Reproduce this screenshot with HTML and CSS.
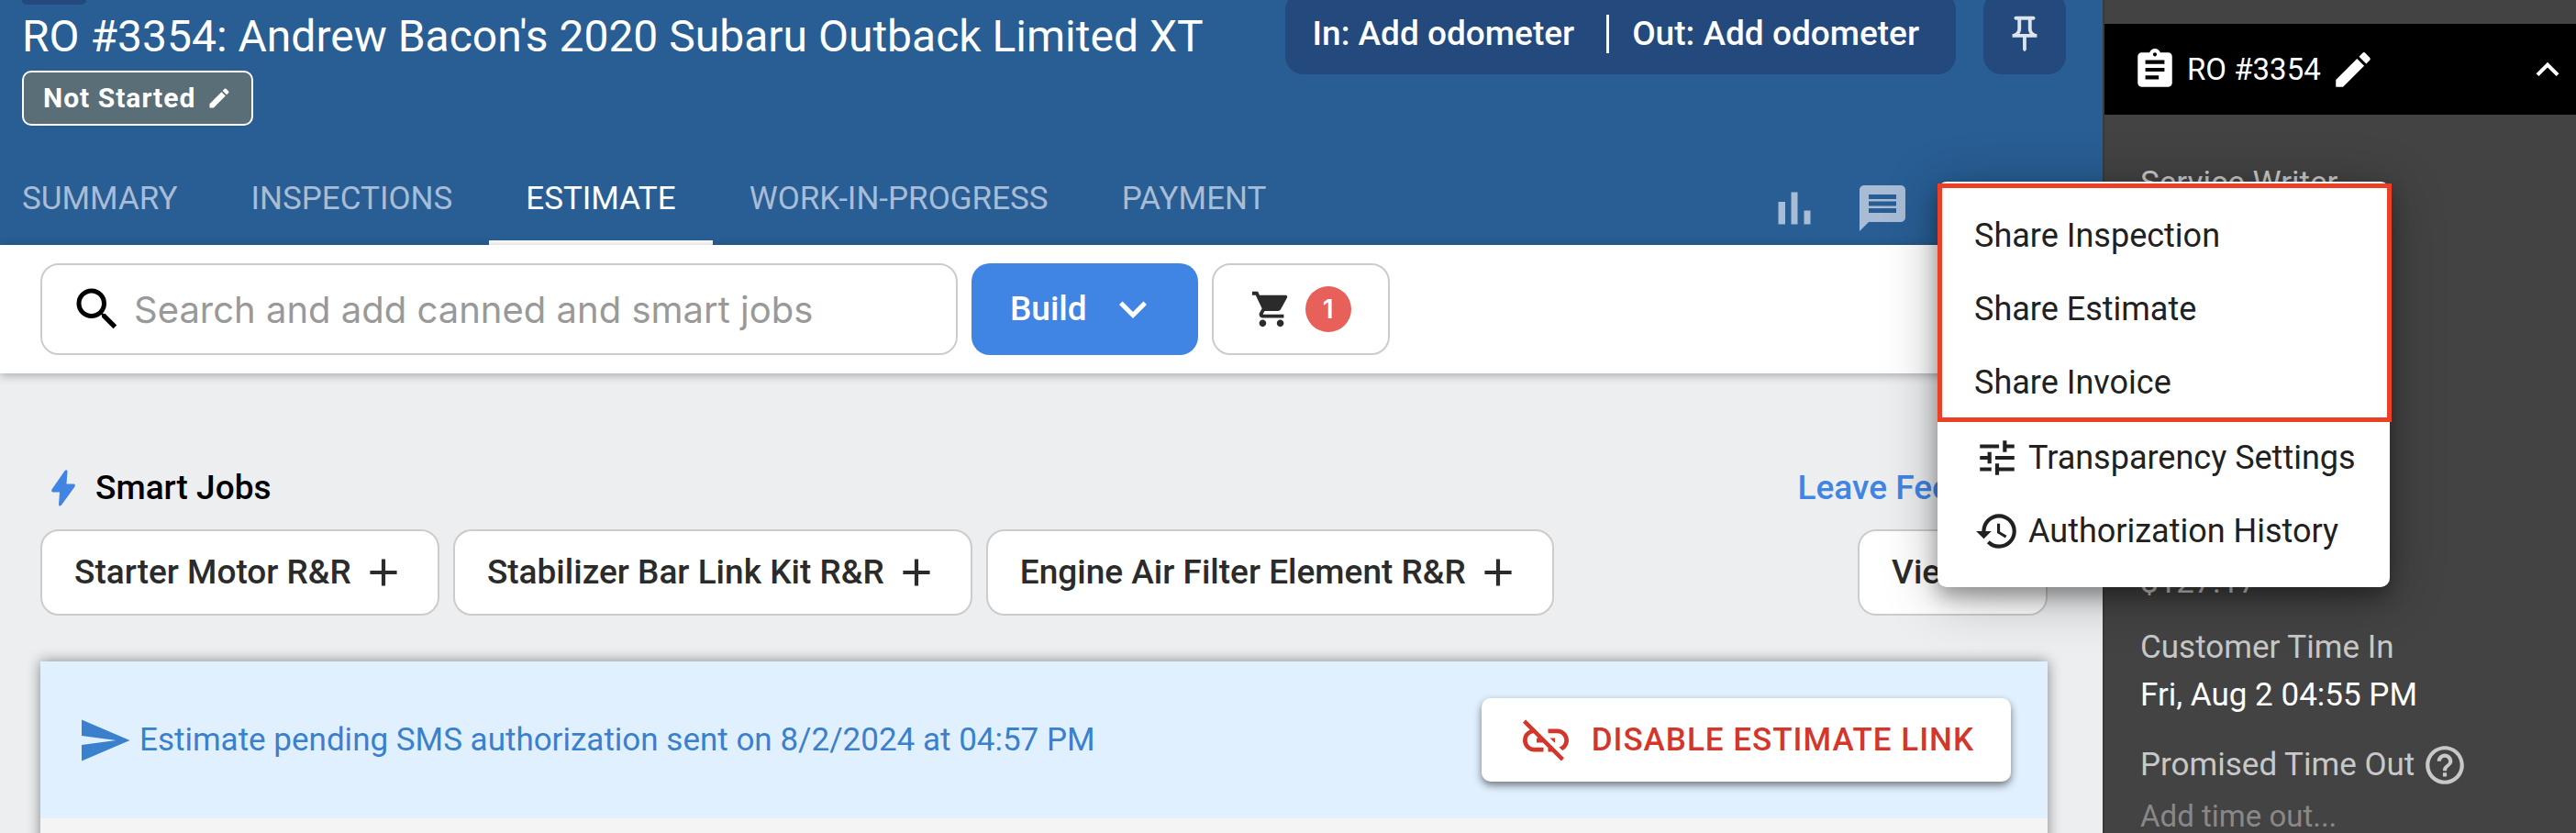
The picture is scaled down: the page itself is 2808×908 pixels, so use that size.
FILE: index.html
```html
<!DOCTYPE html>
<html lang="en">
<head>
    <meta charset="UTF-8">
    <meta name="viewport" content="width=device-width, initial-scale=1.0">
    <title>RO #3354</title>
    <link rel="stylesheet" href="styles.css">
</head>
<body>
    <main class="main">
        <!-- Header -->
        <header class="header">
            <div class="header-top">
                <div class="title-block">
                    <div class="back-chip"></div>
                    <h1>RO #3354: Andrew Bacon's 2020 Subaru Outback Limited XT</h1>
                    <button class="status">Not Started
                        <svg viewBox="0 0 24 24"><path d="M3 17.25V21h3.75L17.81 9.94l-3.75-3.75L3 17.25zM20.71 7.04a1 1 0 0 0 0-1.41l-2.34-2.34a1 1 0 0 0-1.41 0l-1.83 1.83 3.75 3.75 1.83-1.83z"/></svg>
                    </button>
                </div>
                <div class="header-pills">
                    <div class="pill odometer">
                        <button>In: Add odometer</button>
                        <span class="divider"></span>
                        <button>Out: Add odometer</button>
                    </div>
                    <button class="pill pin" aria-label="Pin">
                        <svg viewBox="0 0 24 24"><path d="M14 4v5c0 1.12.37 2.16 1 3H9c.65-.86 1-1.9 1-3V4h4m3-2H7c-.55 0-1 .45-1 1s.45 1 1 1h1v5c0 1.66-1.34 3-3 3v2h5.97v7l1 1 1-1v-7H19v-2c-1.66 0-3-1.34-3-3V4h1c.55 0 1-.45 1-1s-.45-1-1-1z"/></svg>
                    </button>
                </div>
            </div>
            <div class="header-bottom">
                <nav class="tabs">
                    <a href="#">SUMMARY</a>
                    <a href="#">INSPECTIONS</a>
                    <a href="#" class="active">ESTIMATE</a>
                    <a href="#">WORK-IN-PROGRESS</a>
                    <a href="#">PAYMENT</a>
                </nav>
                <div class="header-icons">
                    <button aria-label="Reports">
                        <svg viewBox="0 0 24 24"><path d="M5 9.2h3V19H5V9.2zM10.6 5h2.8v14h-2.8V5zm5.6 8H19v6h-2.8v-6z"/></svg>
                    </button>
                    <button aria-label="Messages">
                        <svg viewBox="0 0 24 24"><path d="M20 2H4c-1.1 0-2 .9-2 2v18l4-4h14c1.1 0 2-.9 2-2V4c0-1.1-.9-2-2-2zm-2 12H6v-2h12v2zm0-3H6V9h12v2zm0-3H6V6h12v2z"/></svg>
                    </button>
                </div>
            </div>
        </header>

        <!-- Toolbar -->
        <div class="toolbar">
            <label class="search">
                <svg viewBox="0 0 24 24"><path d="M15.5 14h-.79l-.28-.27A6.47 6.47 0 0 0 16 9.5 6.5 6.5 0 1 0 9.5 16c1.61 0 3.09-.59 4.23-1.57l.27.28v.79l5 4.99L20.49 19l-4.99-5zm-6 0C7.01 14 5 11.99 5 9.5S7.01 5 9.5 5 14 7.01 14 9.5 11.99 14 9.5 14z"/></svg>
                <input type="text" placeholder="Search and add canned and smart jobs" aria-label="Search jobs">
            </label>
            <button class="build">Build
                <svg viewBox="0 0 24 24"><path d="M7.41 8.59 12 13.17l4.59-4.58L18 10l-6 6-6-6z"/></svg>
            </button>
            <button class="cart" aria-label="Cart">
                <svg viewBox="0 0 24 24"><path d="M7 18c-1.1 0-1.99.9-1.99 2S5.9 22 7 22s2-.9 2-2-.9-2-2-2zM1 2v2h2l3.6 7.59-1.35 2.45c-.16.28-.25.61-.25.96 0 1.1.9 2 2 2h12v-2H7.42a.25.25 0 0 1-.25-.25l.03-.12.9-1.63h7.45c.75 0 1.41-.41 1.75-1.03l3.58-6.49A1 1 0 0 0 20 4H5.21l-.94-2H1zm16 16c-1.1 0-1.99.9-1.99 2s.89 2 1.99 2 2-.9 2-2-.9-2-2-2z"/></svg>
                <span class="count">1</span>
            </button>
        </div>

        <!-- Smart jobs -->
        <section class="content">
            <div class="jobs-head">
                <svg viewBox="0 0 26 40"><path d="M14.5 1.2Q17 -1 17.5 1.8L16.5 15.5L24.5 15.5Q26.5 16 25.5 18.5L11 38.5Q8.5 41 8 38L9 24.5L1.5 24.5Q-.5 24 .5 21.5Z"/></svg>
                <h2>Smart Jobs</h2>
                <a href="#" class="feedback">Leave Feedback</a>
            </div>
            <div class="jobs">
                <button class="job">Starter Motor R&amp;R
                    <svg viewBox="0 0 24 24"><path d="M19 13h-6v6h-2v-6H5v-2h6V5h2v6h6v2z"/></svg>
                </button>
                <button class="job">Stabilizer Bar Link Kit R&amp;R
                    <svg viewBox="0 0 24 24"><path d="M19 13h-6v6h-2v-6H5v-2h6V5h2v6h6v2z"/></svg>
                </button>
                <button class="job">Engine Air Filter Element R&amp;R
                    <svg viewBox="0 0 24 24"><path d="M19 13h-6v6h-2v-6H5v-2h6V5h2v6h6v2z"/></svg>
                </button>
                <button class="job view-all">View All</button>
            </div>

            <!-- Estimate card -->
            <div class="card">
                <div class="notice">
                    <svg class="send" viewBox="0 0 24 24"><path d="M2.01 21 23 12 2.01 3 2 10l15 2-15 2z"/></svg>
                    <p>Estimate pending SMS authorization sent on 8/2/2024 at 04:57 PM</p>
                    <button class="disable">
                        <svg viewBox="0 0 24 24"><path d="M17 7h-4v1.9h4c1.71 0 3.1 1.39 3.1 3.1 0 1.43-.98 2.63-2.31 2.98l1.46 1.46C20.88 15.61 22 13.95 22 12c0-2.76-2.24-5-5-5zm-1 4h-2.19l2 2H16v-2zM2 4.27l3.11 3.11A4.991 4.991 0 0 0 2 12c0 2.76 2.24 5 5 5h4v-1.9H7c-1.71 0-3.1-1.39-3.1-3.1 0-1.59 1.21-2.9 2.76-3.07L8.73 11H8v2h2.73L13 15.27V17h1.73l4.01 4L20 19.74 3.27 3 2 4.27z"/></svg>
                        DISABLE ESTIMATE LINK
                    </button>
                </div>
            </div>
        </section>
    </main>

    <!-- Sidebar -->
    <aside class="sidebar">
        <div class="side-head">
            <svg viewBox="0 0 24 24"><path d="M19 3h-4.18C14.4 1.84 13.3 1 12 1c-1.3 0-2.4.84-2.82 2H5c-1.1 0-2 .9-2 2v14c0 1.1.9 2 2 2h14c1.1 0 2-.9 2-2V5c0-1.1-.9-2-2-2zm-7 0c.55 0 1 .45 1 1s-.45 1-1 1-1-.45-1-1 .45-1 1-1zm2 14H7v-2h7v2zm3-4H7v-2h10v2zm0-4H7V7h10v2z"/></svg>
            <span>RO #3354</span>
            <svg viewBox="0 0 24 24"><path d="M3 17.25V21h3.75L17.81 9.94l-3.75-3.75L3 17.25zM20.71 7.04a1 1 0 0 0 0-1.41l-2.34-2.34a1 1 0 0 0-1.41 0l-1.83 1.83 3.75 3.75 1.83-1.83z"/></svg>
            <svg class="collapse" viewBox="0 0 24 24"><path d="M12 8l-6 6 1.41 1.41L12 10.83l4.59 4.58L18 14z"/></svg>
        </div>
        <dl class="details">
            <div class="writer">
                <dt>Service Writer</dt>
            </div>
            <div class="total">
                <dd>$127.17</dd>
            </div>
            <div>
                <dt>Customer Time In</dt>
                <dd>Fri, Aug 2 04:55 PM</dd>
            </div>
            <div>
                <dt>Promised Time Out
                    <svg viewBox="0 0 24 24"><path d="M11 18h2v-2h-2v2zm1-16C6.48 2 2 6.48 2 12s4.48 10 10 10 10-4.48 10-10S17.52 2 12 2zm0 18c-4.41 0-8-3.59-8-8s3.59-8 8-8 8 3.59 8 8-3.59 8-8 8zm0-14c-2.21 0-4 1.79-4 4h2c0-1.1.9-2 2-2s2 .9 2 2c0 2-3 1.75-3 5h2c0-2.25 3-2.5 3-5 0-2.21-1.79-4-4-4z"/></svg>
                </dt>
                <dd class="empty">Add time out...</dd>
            </div>
        </dl>

        <!-- Share menu -->
        <div class="menu">
            <div class="menu-group">
                <button>Share Inspection</button>
                <button>Share Estimate</button>
                <button>Share Invoice</button>
            </div>
            <button>
                <svg viewBox="0 0 24 24"><path d="M3 17v2h6v-2H3zM3 5v2h10V5H3zm10 16v-2h8v-2h-8v-2h-2v6h2zM7 9v2H3v2h4v2h2V9H7zm14 4v-2H11v2h10zm-6-4h2V7h4V5h-4V3h-2v6z"/></svg>
                Transparency Settings
            </button>
            <button>
                <svg viewBox="0 0 24 24"><path d="M13 3a9 9 0 0 0-9 9H1l3.89 3.89.07.14L9 12H6c0-3.87 3.13-7 7-7s7 3.13 7 7-3.13 7-7 7c-1.93 0-3.68-.79-4.94-2.06l-1.42 1.42A8.954 8.954 0 0 0 13 21a9 9 0 0 0 0-18zm-1 5v5l4.28 2.54.72-1.21-3.5-2.08V8H12z"/></svg>
                Authorization History
            </button>
        </div>
    </aside>
</body>
</html>
```

FILE: styles.css
```css
* {
    box-sizing: border-box;
}

body {
    margin: 0;
    display: flex;
    min-height: 100vh;
    background: #edeef0;
    font-family: Roboto, Arial, sans-serif;
    font-size: 35px;
    line-height: 52px;
    overflow: hidden;
}

h1, h2, p, dl, dd {
    margin: 0;
}

button {
    font: inherit;
    color: inherit;
    background: none;
    border: none;
    padding: 0;
    display: flex;
    align-items: center;
    white-space: nowrap;
    cursor: pointer;
}

a {
    color: inherit;
    text-decoration: none;
}

svg {
    width: 50px;
    height: 50px;
    fill: currentColor;
    flex-shrink: 0;
}

.main {
    flex: 1;
    min-width: 0;
    display: flex;
    flex-direction: column;
}

/* Header */
.header {
    background: #285e94;
    color: #fff;
}

.header-top {
    display: flex;
    justify-content: space-between;
    align-items: flex-start;
    padding: 0 40px 0 24px;
}

.back-chip {
    width: 70px;
    height: 5px;
    background: #23497d;
    border-radius: 0 0 8px 8px;
}

h1 {
    font-size: 48px;
    font-weight: 400;
    line-height: 70px;
}

.status {
    height: 60px;
    margin-top: 2px;
    padding: 0 21px;
    gap: 12px;
    border: 2px solid #fff;
    border-radius: 10px;
    background: #5a6e78;
    font-size: 30px;
    font-weight: 700;
    letter-spacing: 1px;
}

.status svg {
    width: 28px;
    height: 28px;
}

.header-pills {
    display: flex;
    gap: 30px;
    margin-top: -9px;
}

.pill {
    height: 90px;
    border-radius: 20px;
    background: #23497d;
}

.odometer {
    display: flex;
    align-items: center;
    padding: 2px 40px 0 30px;
    font-size: 37px;
    font-weight: 500;
}

.divider {
    width: 3px;
    height: 42px;
    margin: 0 25px 0 35px;
    background: #fff;
}

.pin {
    width: 90px;
    padding-top: 2px;
    justify-content: center;
    color: #dce4ed;
}

.pin svg {
    width: 46px;
    height: 46px;
}

.header-bottom {
    display: flex;
    justify-content: space-between;
    padding-right: 210px;
    margin-top: 30px;
}

.tabs {
    display: flex;
    margin-left: -16px;
}

.tabs a {
    padding: 24px 40px 19px;
    border-bottom: 5px solid transparent;
    color: #a8bcd6;
}

.tabs a.active {
    color: #fff;
    border-color: #fff;
}

.header-icons {
    display: flex;
    align-items: center;
    gap: 36px;
    padding-top: 20px;
    color: #a8bcd6;
}

.header-icons svg {
    width: 60px;
    height: 60px;
}

/* Toolbar */
.toolbar {
    display: flex;
    gap: 15px;
    padding: 20px 44px;
    background: #fff;
    box-shadow: 0 2px 10px rgba(0, 0, 0, 0.3);
}

.search {
    width: 1000px;
    height: 100px;
    display: flex;
    align-items: center;
    gap: 10px;
    padding: 0 30px;
    border: 2px solid #ccc;
    border-radius: 20px;
}

.search svg {
    width: 60px;
    height: 60px;
}

.search input {
    flex: 1;
    min-width: 0;
    border: none;
    outline: none;
    padding: 0;
    font-family: Inter, sans-serif;
    font-size: 40px;
}

.search input::placeholder {
    color: #999;
}

.build {
    gap: 20px;
    padding: 0 41px 0 42px;
    border-radius: 20px;
    background: #4085e3;
    color: #fff;
    font-size: 37px;
    font-weight: 500;
}

.build svg {
    width: 60px;
    height: 60px;
}

.cart {
    gap: 14px;
    padding: 0 40px;
    border: 2px solid #ccc;
    border-radius: 20px;
    color: #2b2b2b;
}

.cart svg {
    width: 46px;
    height: 46px;
}

.count {
    width: 50px;
    height: 50px;
    border-radius: 50%;
    background: #e8605a;
    color: #fff;
    font-family: Inter, sans-serif;
    font-size: 28px;
    font-weight: 600;
    line-height: 50px;
    text-align: center;
}

/* Content */
.content {
    flex: 1;
    display: flex;
    flex-direction: column;
    padding: 99px 60px 0 44px;
}

.jobs-head {
    display: flex;
    align-items: center;
    padding-left: 12px;
}

.jobs-head svg {
    width: 26px;
    height: 40px;
    color: #4085e3;
}

h2 {
    margin-left: 22px;
    font-size: 37px;
    font-weight: 500;
}

.feedback {
    margin-left: auto;
    margin-right: 6px;
    color: #4085e3;
    font-size: 37px;
    font-weight: 500;
}

.jobs {
    display: flex;
    gap: 15px;
    margin-top: 19px;
}

.job {
    height: 94px;
    gap: 10px;
    padding: 0 34px 0 35px;
    border: 2px solid #ccc;
    border-radius: 20px;
    background: #fff;
    color: #2b2b2b;
    font-size: 37px;
    font-weight: 500;
}

.view-all {
    width: 207px;
    margin-left: auto;
}

.card {
    flex: 1;
    margin-top: 50px;
    background: #f4f4f4;
    box-shadow: 0 0 14px rgba(0, 0, 0, 0.45);
}

.notice {
    display: flex;
    align-items: center;
    padding: 40px;
    background: #e1f0fe;
    color: #3a80cc;
}

.send {
    width: 60px;
    height: 60px;
    margin-right: 8px;
}

.disable {
    height: 91px;
    margin-left: auto;
    padding: 0 40px;
    gap: 20px;
    border-radius: 10px;
    background: #fff;
    box-shadow: 0 4px 8px rgba(0, 0, 0, 0.5);
    color: #d3372c;
    font-weight: 500;
    letter-spacing: 1px;
}

.disable svg {
    width: 60px;
    height: 60px;
}

/* Sidebar */
.sidebar {
    position: relative;
    width: 516px;
    padding-top: 26px;
    border-left: 2px solid #3a3a3a;
    background: #434343;
    color: #fff;
}

.side-head {
    display: flex;
    align-items: center;
    height: 99px;
    padding: 0 6px 0 30px;
    background: #000;
    font-size: 33px;
}

.side-head span {
    margin: 0 10px;
}

.side-head .collapse {
    margin-left: auto;
}

.details {
    padding: 0 39px;
}

.details dt {
    display: flex;
    align-items: center;
    gap: 8px;
    color: #c8c8c8;
}

.details > div {
    padding-bottom: 24px;
}

.details .writer {
    height: 484px;
    padding-top: 49px;
}

.details .total {
    padding-bottom: 19px;
    color: #c8c8c8;
}

.details .empty {
    padding-top: 4px;
    color: #888;
    font-size: 33px;
}

/* Share menu */
.menu {
    position: absolute;
    top: 198px;
    right: 203px;
    width: 493px;
    padding: 19px 0 21px;
    border-radius: 10px;
    background: #fff;
    box-shadow: 0 10px 60px rgba(0, 0, 0, 0.3), 0 10px 20px rgba(0, 0, 0, 0.3);
    color: #212121;
    font-size: 36px;
}

.menu button {
    width: 100%;
    height: 80px;
    padding: 0 40px;
    gap: 9px;
}

.menu-group {
    margin-bottom: 2px;
}

/* highlight around the share options */
.menu-group::after {
    content: "";
    box-sizing: border-box;
    position: absolute;
    top: 2px;
    left: 0;
    right: -2px;
    height: 260px;
    border: 5px solid #ec4026;
    pointer-events: none;
}
```
